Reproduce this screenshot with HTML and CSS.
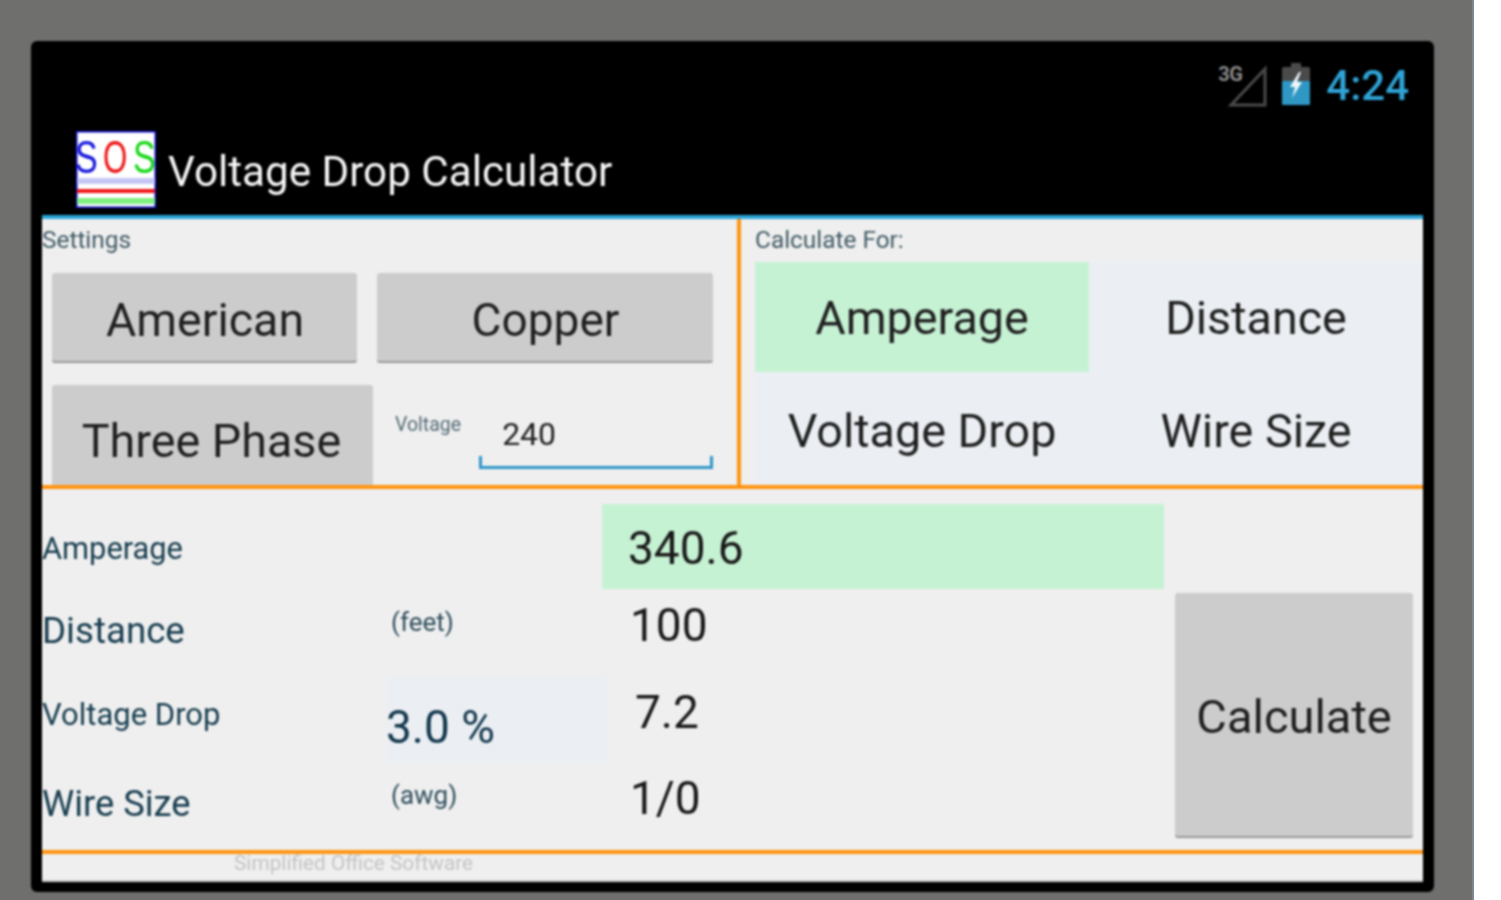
FILE: index.html
```html
<!DOCTYPE html>
<html lang="en">
<head>
<meta charset="utf-8">
<title>Voltage Drop Calculator</title>
<link rel="stylesheet" href="styles.css">
</head>
<body>
<div class="bezel">
  <div class="phone">
    <div class="status">
      <span class="net">3G</span>
      <svg class="signal" width="40" height="44" viewBox="0 0 40 44"><path d="M3 40 L37 4 V40 Z" fill="none" stroke="#4a4a4a" stroke-width="3"/></svg>
      <svg class="battery" width="28" height="42" viewBox="0 0 28 42"><path d="M9 0h10v4h7a2 2 0 0 1 2 2v12H0V6a2 2 0 0 1 2-2h7z" fill="#4a4a4a"/><rect y="18" width="28" height="24" rx="1" fill="#2f97c4"/><path d="M17 9 L8 24 H13 L10 35 L20 19 H15 L19 9 Z" fill="#eef6fa"/></svg>
      <span class="clock">4:24</span>
    </div>
    <div class="titlebar">
      <svg class="logo" width="80" height="77" viewBox="0 0 80 77">
        <rect width="80" height="77" fill="#fff"/>
        <rect x=".75" y=".75" width="78.5" height="75.5" fill="none" stroke="#1212d8" stroke-width="1.5"/>
        <rect x="1" y="47" width="78" height="6" fill="#c6c6f4"/>
        <rect x="1" y="58" width="78" height="4" fill="#f01818"/>
        <rect x="1" y="67" width="78" height="6" fill="#80f080"/>
        <text class="logo-s" transform="translate(-1 42) scale(.74 1)" fill="#1414dc">S</text>
        <text class="logo-s" transform="translate(27 42) scale(.68 1)" fill="#ee1414">O</text>
        <text class="logo-s" transform="translate(57 42) scale(.74 1)" fill="#14d814">S</text>
      </svg>
      <span class="app-name">Voltage Drop Calculator</span>
    </div>
    <div class="screen">
      <div class="top">
        <section class="settings">
          <div class="caption">Settings</div>
          <div class="btn-row">
            <div class="btn btn-american">American</div>
            <div class="btn btn-copper">Copper</div>
          </div>
          <div class="btn-row btn-row-low">
            <div class="btn btn-phase">Three Phase</div>
            <span class="voltage-label">Voltage</span>
            <div class="voltage-input">240</div>
          </div>
        </section>
        <section class="calc-for">
          <div class="caption">Calculate For:</div>
          <div class="options">
            <div class="opt opt-on">Amperage</div>
            <div class="opt">Distance</div>
            <div class="opt">Voltage Drop</div>
            <div class="opt">Wire Size</div>
          </div>
        </section>
      </div>
      <div class="results">
        <div class="lbl lbl-amp">Amperage</div>
        <div class="val val-amp">340.6</div>

        <div class="lbl lbl-dist">Distance</div>
        <div class="unit unit-feet">(feet)</div>
        <div class="val val-dist">100</div>

        <div class="lbl lbl-drop">Voltage Drop</div>
        <div class="pct">3.0 %</div>
        <div class="val val-drop">7.2</div>

        <div class="lbl lbl-wire">Wire Size</div>
        <div class="unit unit-awg">(awg)</div>
        <div class="val val-wire">1/0</div>

        <div class="btn btn-calc">Calculate</div>
      </div>
      <div class="footer">Simplified Office Software</div>
    </div>
  </div>
</div>
</body>
</html>
```
FILE: styles.css
```css
* { box-sizing: border-box; }
html, body { margin: 0; height: 900px; overflow: hidden; background: #fff; }
body { font-family: Roboto, "Liberation Sans", sans-serif; }

.bezel {
  width: 1474px;
  height: 900px;
  padding: 41px 40px 8px 31px;
  background: #6f6f6d;
  border-right: 2px solid #7d8794;
}
.phone {
  width: 1403px;
  height: 851px;
  background: #000;
  border-radius: 6px;
  display: flex;
  flex-direction: column;
  filter: blur(.8px);
}

.status {
  height: 72px;
  padding: 22px 25px 0 0;
  display: flex;
  justify-content: flex-end;
  align-items: flex-start;
}
.net { font-size: 20px; font-weight: 700; color: #8a8a8a; line-height: 22px; letter-spacing: -.5px; }
.signal { margin: 2px 0 0 -14px; }
.battery { margin-left: 14px; }
.clock { font-size: 42px; font-weight: 500; line-height: 46px; color: #2fa3d6; margin-left: 16px; }

.titlebar {
  height: 102px;
  padding: 18px 0 0 45px;
  display: flex;
  align-items: flex-start;
}
.logo { flex: none; }
.logo-s { font-family: "Liberation Sans", sans-serif; font-size: 46px; }
.app-name { font-size: 42.2px; line-height: 50px; color: #f6f6f6; margin: 16px 0 0 12px; }

.screen {
  flex: 1;
  margin: 0 11px 10px;
  background: #efefef;
  border-top: 4px solid #2ba6d8;
  display: flex;
  flex-direction: column;
}

.top {
  height: 270px;
  display: flex;
  border-bottom: 4px solid #ff9410;
}
.settings {
  width: 699px;
  border-right: 4px solid #ff9410;
  overflow: hidden;
}
.calc-for { flex: 1; padding-left: 14px; }
.caption {
  font-size: 24.4px;
  line-height: 28px;
  color: #405a65;
  padding-top: 7px;
  height: 43px;
}
.settings .caption { height: 54px; }

.btn {
  background: #cdcccd;
  border-radius: 3px;
  border-bottom: 2px solid #989898;
  color: #1f1f1f;
  display: flex;
  align-items: center;
  justify-content: center;
}
.btn-row { display: flex; padding-left: 10px; }
.btn-american { width: 305px; height: 90px; font-size: 46.5px; padding: 6px 0 0 1px; }
.btn-copper { width: 336px; height: 90px; font-size: 46px; margin-left: 20px; padding: 6px 0 0 1px; }
.btn-row-low { margin-top: 22px; height: 100px; align-items: flex-start; }
.btn-phase { width: 321px; height: 110px; font-size: 46.7px; flex: none; padding: 4px 2px 0 0; }
.voltage-label { font-size: 19.5px; color: #536a74; margin: 28px 0 0 22px; line-height: 24px; }
.voltage-input {
  width: 234px;
  height: 56px;
  margin: 28px 0 0 18px;
  padding-left: 20px;
  font-size: 32px;
  line-height: 42px;
  color: #222;
  border-bottom: 3px solid #2f97c9;
  border-left: 3px solid #2f97c9;
  border-right: 3px solid #2f97c9;
  border-image: linear-gradient(to top, #2f97c9 12px, transparent 12px) 3;
}

.options {
  display: grid;
  grid-template-columns: 334px 334px;
  grid-template-rows: 110px 112px;
  background: #ebeff3;
}
.opt {
  font-size: 46.7px;
  color: #1f1f1f;
  display: flex;
  align-items: center;
  justify-content: center;
  padding-top: 1px;
}
.opt:nth-child(n+3) { padding-top: 5px; }
.opt-on { background: #c6f2d4; }

.results {
  height: 361px;
  padding-top: 15px;
  display: grid;
  grid-template-columns: 345px 215px 562px 1fr;
  grid-template-rows: 85px 88px 85px 88px;
}
.lbl { grid-column: 1; color: #163c4e; line-height: 40px; }
.lbl-amp { grid-row: 1; font-size: 30.8px; align-self: center; padding-top: 4px; }
.lbl-dist { grid-row: 2; font-size: 36.7px; margin-top: 22px; }
.lbl-drop { grid-row: 3; font-size: 31px; margin-top: 18px; }
.lbl-wire { grid-row: 4; font-size: 36.3px; margin-top: 22px; }

.unit { grid-column: 2; color: #2f4e5c; font-size: 26px; line-height: 32px; padding-left: 4px; }
.unit-feet { grid-row: 2; margin-top: 17px; }
.unit-awg { grid-row: 4; margin-top: 17px; }

.pct {
  grid-column: 2;
  grid-row: 3;
  margin-right: -5px;
  background: #ebeff3;
  color: #12364c;
  font-size: 46px;
  line-height: 54px;
  padding-top: 23px;
  text-indent: -1px;
}

.val { grid-column: 3; font-size: 46px; line-height: 54px; color: #181818; padding-left: 28px; }
.val-amp { grid-row: 1; background: #c6f2d4; padding-left: 26px; padding-top: 17px; }
.val-dist { grid-row: 2; margin-top: 9px; }
.val-drop { grid-row: 3; margin-top: 8px; padding-left: 33px; }
.val-wire { grid-row: 4; margin-top: 9px; }

.btn-calc {
  grid-column: 4;
  grid-row: 2 / 5;
  margin: 4px 10px 12px 11px;
  font-size: 47px;
  padding-top: 4px;
}

.footer {
  flex: 1;
  border-top: 4px solid #ff9410;
  font-size: 20.8px;
  line-height: 18px;
  color: #c4c4c4;
  padding: 0 0 0 192px;
  border-bottom: 2px solid #c8c8c8;
}
```
